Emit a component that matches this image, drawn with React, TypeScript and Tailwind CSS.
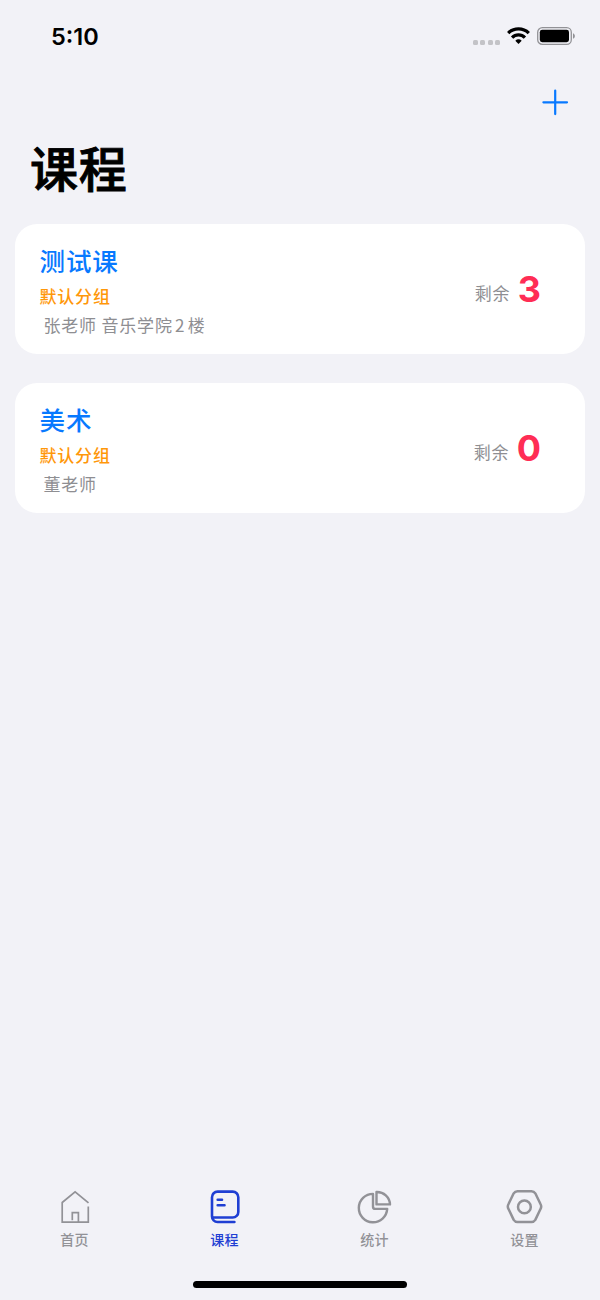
import type { ReactNode } from 'react';

const cjk = "font-['Noto_Sans_CJK_SC',sans-serif]";
const latin = "font-['Inter',sans-serif]";

type Course = { name: string; group: string; teacher: ReactNode; left: number };

const courses: Course[] = [
  {
    name: '测试课',
    group: '默认分组',
    teacher: (
      <>
        张老师 音乐学院<span className="mr-[2.4px] ml-[2.4px]">2</span>楼
      </>
    ),
    left: 3,
  },
  { name: '美术', group: '默认分组', teacher: '董老师', left: 0 },
];

function StatusBar() {
  return (
    <div className="flex h-[72px] items-start justify-between pr-[25px] pl-[51px]">
      <span className={`${latin} mt-[23px] text-[23.5px] leading-[28px] font-[560] text-black`}>5:10</span>
      <div className="mt-[26px] flex h-5 items-center">
        <div className="mt-[12px] mr-[7px] flex gap-[2.4px]">
          {[0, 1, 2, 3].map((i) => (
            <span key={i} className="h-[5px] w-[5px] rounded-[1.5px] bg-[#c3c3c7]" />
          ))}
        </div>
        <svg width="23" height="18" viewBox="0 0 23 18" className="mr-[7px]" fill="none" stroke="#000" strokeWidth="3.3">
          <path d="M1.2 6.1a14.8 14.8 0 0 1 20.6 0" />
          <path d="M5.1 10.6a9.1 9.1 0 0 1 12.8 0" />
          <path d="M8.3 13.8a4.8 4.8 0 0 1 6.4 0l-3.2 3.3z" fill="#000" stroke="none" />
        </svg>
        <svg width="38" height="18" viewBox="0 0 38 18">
          <rect x="0.7" y="0.7" width="33.6" height="16.6" rx="4.6" fill="none" stroke="#929296" strokeWidth="1.3" />
          <rect x="2.8" y="2.8" width="29.2" height="12.4" rx="2.4" />
          <path d="M36 6.2c1.2.5 1.9 1.6 1.9 2.8s-.7 2.3-1.9 2.8z" fill="#929296" />
        </svg>
      </div>
    </div>
  );
}

function CourseCard({ course }: { course: Course }) {
  return (
    <article className="flex h-[130px] items-start justify-between rounded-[22px] bg-white pr-[44px] pl-[24.5px]">
      <div className="flex flex-col pt-[19px]">
        <h2 className="h-[38px] text-[25.5px] leading-[33px] font-medium tracking-[0.9px] text-[#0879ff]">{course.name}</h2>
        <p className="h-[29px] text-[17px] leading-[30px] font-medium tracking-[0.8px] text-[#ff9709]">{course.group}</p>
        <p className="pl-[4px] text-[17px] leading-[30px] tracking-[0.8px] text-[#8e8e92]">{course.teacher}</p>
      </div>
      <div className="flex items-center pt-[39px]">
        <span className="mt-[8px] mr-[7.5px] text-[17px] leading-[44px] tracking-[0.7px] text-[#8e8e92]">剩余</span>
        <span className={`${latin} text-[36px] leading-[44px] font-bold text-[#ff2d55]`}>{course.left}</span>
      </div>
    </article>
  );
}

function Tab({ label, active, children }: { label: string; active?: boolean; children: ReactNode }) {
  return (
    <button className={`flex flex-col items-center ${active ? 'text-[#1f3fd3]' : 'text-[#929297]'}`}>
      <svg width="40" height="40" viewBox="0 0 40 40" fill="none" stroke="currentColor" strokeLinecap="round" strokeLinejoin="round">
        {children}
      </svg>
      <span className="mt-px -ml-px text-[14px] leading-[22px] font-medium tracking-[0.3px]">{label}</span>
    </button>
  );
}

export default function App() {
  return (
    <div className={`${cjk} flex h-[1300px] w-[600px] flex-col bg-[#f2f2f7]`}>
      <StatusBar />
      <header className="h-[152px]">
        <div className="flex justify-end pt-[17px] pr-[31px]">
          <button aria-label="添加">
            <svg width="28" height="27" viewBox="0 0 28 27" fill="none" stroke="#0879ff" strokeWidth="2.2" strokeLinecap="round">
              <path d="M14.2 1.5v23.6M2.4 13.3h23.6" />
            </svg>
          </button>
        </div>
        <h1 className="mt-[14px] pl-[30px] text-[48px] leading-[72px] font-medium tracking-[0.8px] text-black [-webkit-text-stroke:0.9px_black]">课程</h1>
      </header>
      <main className="flex flex-1 flex-col gap-[29px] px-[15px]">
        {courses.map((c) => (
          <CourseCard key={c.name} course={c} />
        ))}
      </main>
      <nav className="grid h-[94px] grid-cols-4">
        <Tab label="首页">
          <path strokeWidth="1.7" strokeLinecap="butt" strokeLinejoin="miter" d="M33.5 15.9L20.1 4.8L7.2 15.5V35.1H33.3V19.6M17.3 33.2V25.6H23.4V35" />
        </Tab>
        <Tab label="课程" active>
          <path strokeWidth="2.6" d="M29.4 35H12.5a5.5 5.5 0 0 1-5.5-5.5V10.2a5.6 5.6 0 0 1 5.6-5.6h15.1a5.6 5.6 0 0 1 5.6 5.6v14.7a5.6 5.6 0 0 1-5.6 5.6H8.5M12.7 12.7h4.3M12.7 18.2h6.8" />
        </Tab>
        <Tab label="统计">
          <path strokeWidth="2.4" d="M18 6.9A14.2 14.2 0 1 0 32.2 21.9H20.2a2.2 2.2 0 0 1-2.2-2.2z" />
          <path strokeWidth="2.4" d="M21.5 5V17.4H35A13 13 0 0 0 21.5 5z" />
        </Tab>
        <Tab label="设置">
          <path strokeWidth="2.5" d="M12.5 4.2H26.5a4.5 4.5 0 0 1 3.8 2.1L35.6 17.2a5 5 0 0 1 0 4.6L30.3 32.9a4.5 4.5 0 0 1-3.8 2.1H12.5a4.5 4.5 0 0 1-3.8-2.1L3.4 21.8a5 5 0 0 1 0-4.6L8.7 6.3a4.5 4.5 0 0 1 3.8-2.1z" />
          <circle cx="19.4" cy="19.9" r="6.4" strokeWidth="2.5" />
        </Tab>
      </nav>
      <footer className="flex h-[19px] justify-center">
        <div className="h-[7px] w-[214px] rounded-full bg-black" />
      </footer>
    </div>
  );
}
